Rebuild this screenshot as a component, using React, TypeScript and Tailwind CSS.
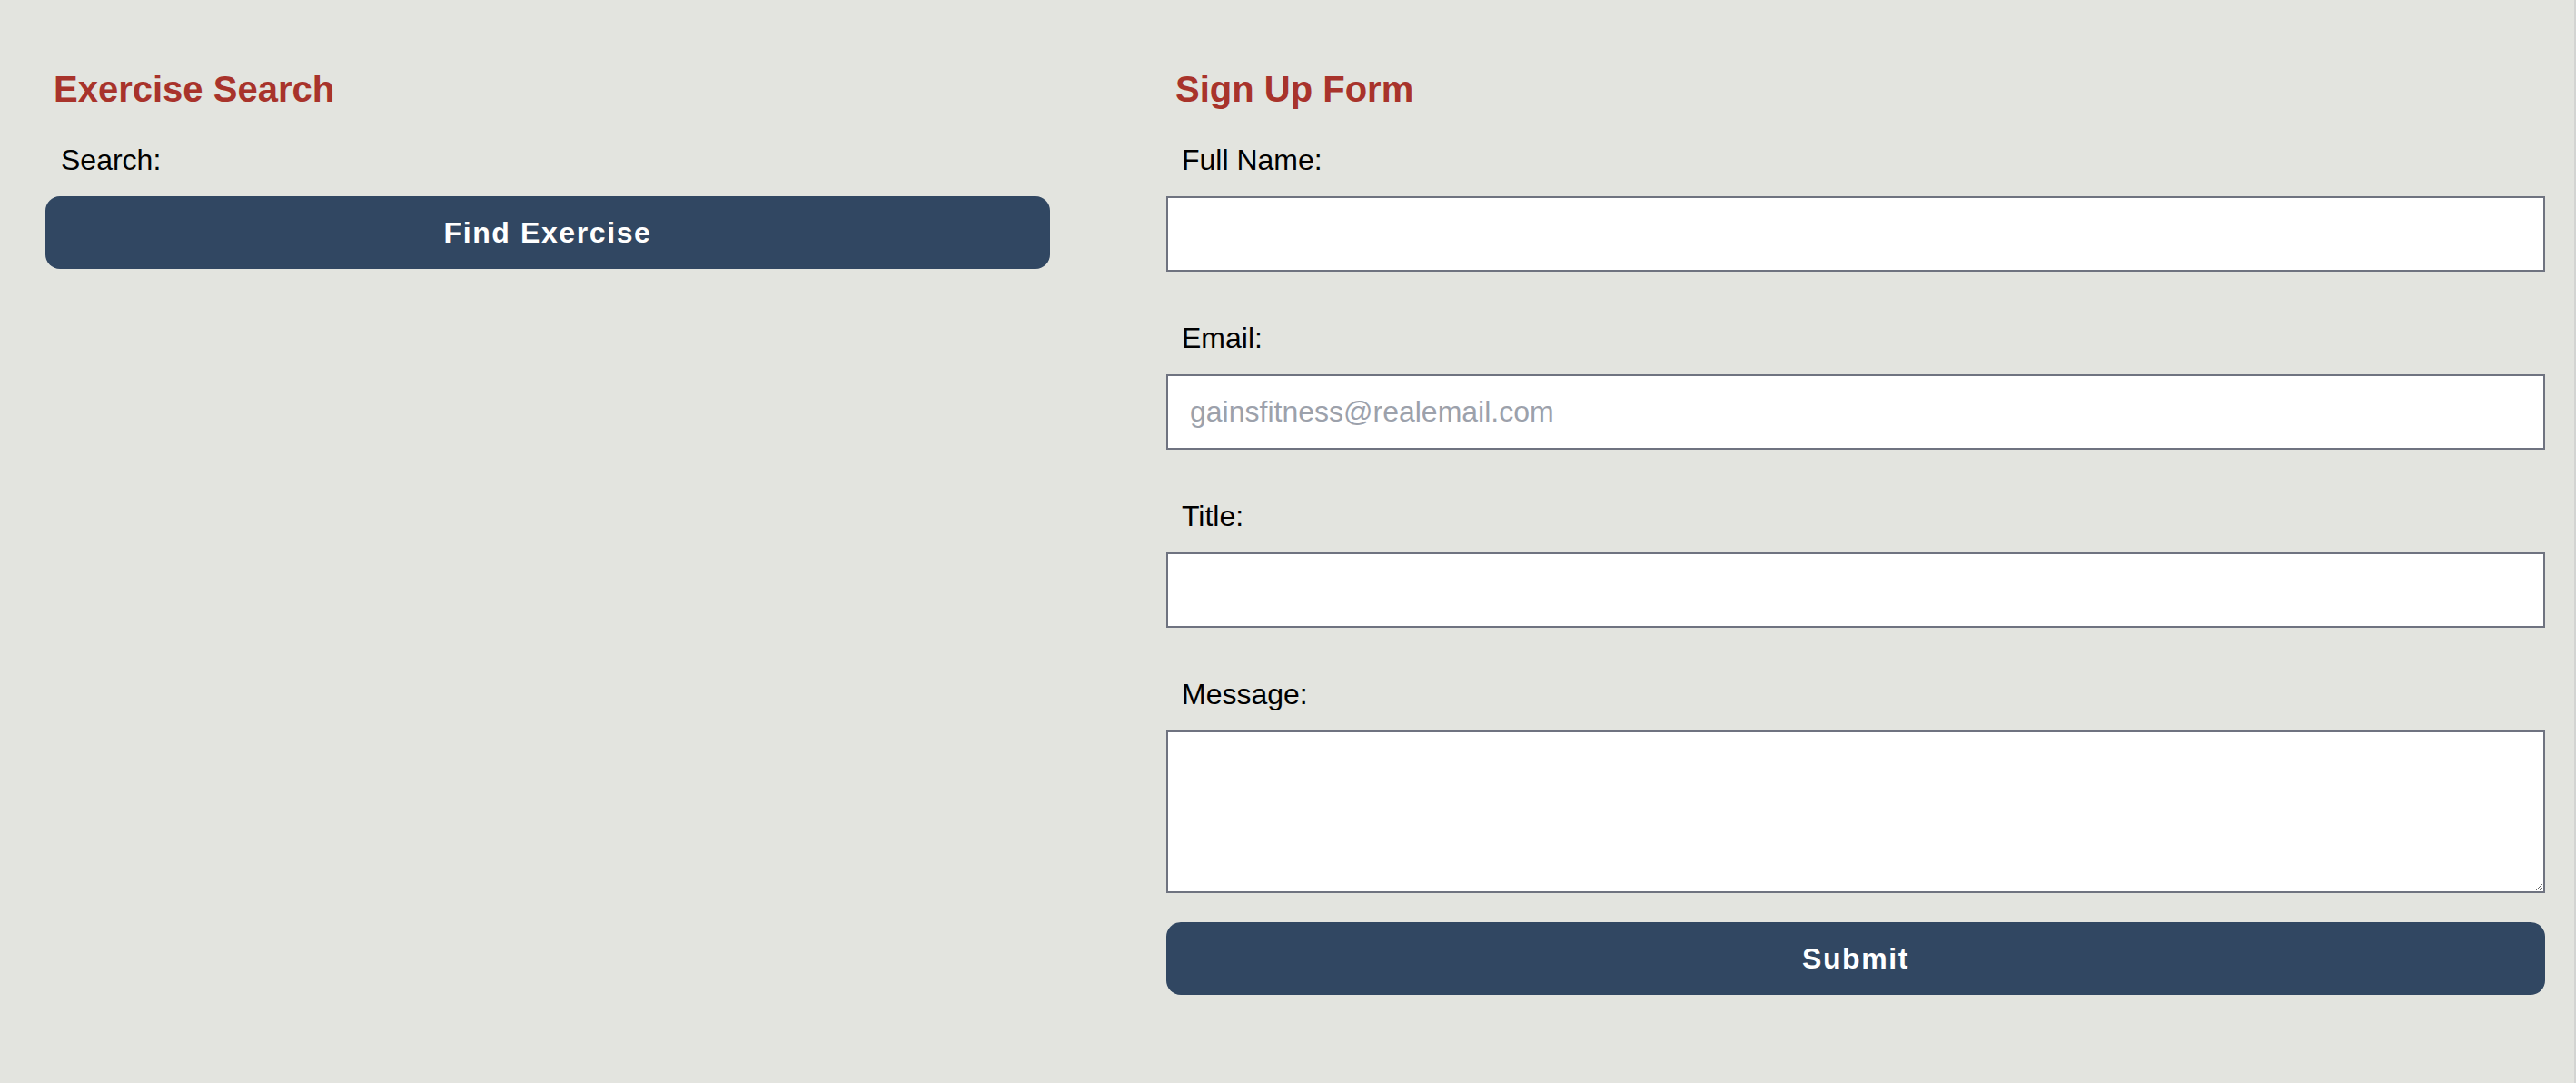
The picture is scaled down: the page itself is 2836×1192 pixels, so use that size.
const fieldLabel = "block pl-[17px] text-[32px] leading-[40px] text-black";
const fieldInput =
	"mt-[20px] block w-full h-[83px] border-2 border-[#6f7380] bg-white px-[24px] text-[32px] text-black placeholder:text-[#9ca1ab] outline-none";

const ExerciseSearch = () => {
	return (
		<section className="w-[1106px] shrink-0">
			<h2 className="pl-[9px] text-[40px] leading-[48px] font-bold text-[#a8332b]">
				Exercise Search
			</h2>
			<label className={`${fieldLabel} mt-[34px]`}>Search:</label>
			<button className="mt-[20px] w-full h-[80px] rounded-[16px] bg-[#314762] text-white text-[32px] font-bold tracking-[1.6px]">
				Find Exercise
			</button>
		</section>
	);
};

const SignUpForm = () => {
	return (
		<section className="flex-1">
			<h2 className="pl-[10px] text-[40px] leading-[48px] font-bold text-[#a8332b]">
				Sign Up Form
			</h2>
			<form className="mt-[34px]" onSubmit={(e) => e.preventDefault()}>
				{/* Full name */}
				<label className={fieldLabel}>Full Name:</label>
				<input type="text" className={fieldInput} />

				{/* Email */}
				<label className={`${fieldLabel} mt-[53px]`}>Email:</label>
				<input
					type="email"
					placeholder="gainsfitness@realemail.com"
					className={fieldInput}
				/>

				{/* Title */}
				<label className={`${fieldLabel} mt-[53px]`}>Title:</label>
				<input type="text" className={fieldInput} />

				{/* Message */}
				<label className={`${fieldLabel} mt-[53px]`}>Message:</label>
				<textarea className="mt-[20px] block w-full h-[179px] border-2 border-[#6f7380] bg-white px-[24px] py-[12px] text-[32px] text-black outline-none" />

				<button
					type="submit"
					className="mt-[32px] w-full h-[80px] rounded-[16px] bg-[#314762] text-white text-[32px] font-bold tracking-[1.6px]"
				>
					Submit
				</button>
			</form>
		</section>
	);
};

export default function App() {
	return (
		<div className="min-h-screen bg-[#e3e4df] border-r-2 border-[#d3d4d2] flex gap-[128px] pl-[50px] pr-[32px] pt-[74px] font-['Liberation_Sans',Arial,sans-serif]">
			<ExerciseSearch />
			<SignUpForm />
		</div>
	);
}
